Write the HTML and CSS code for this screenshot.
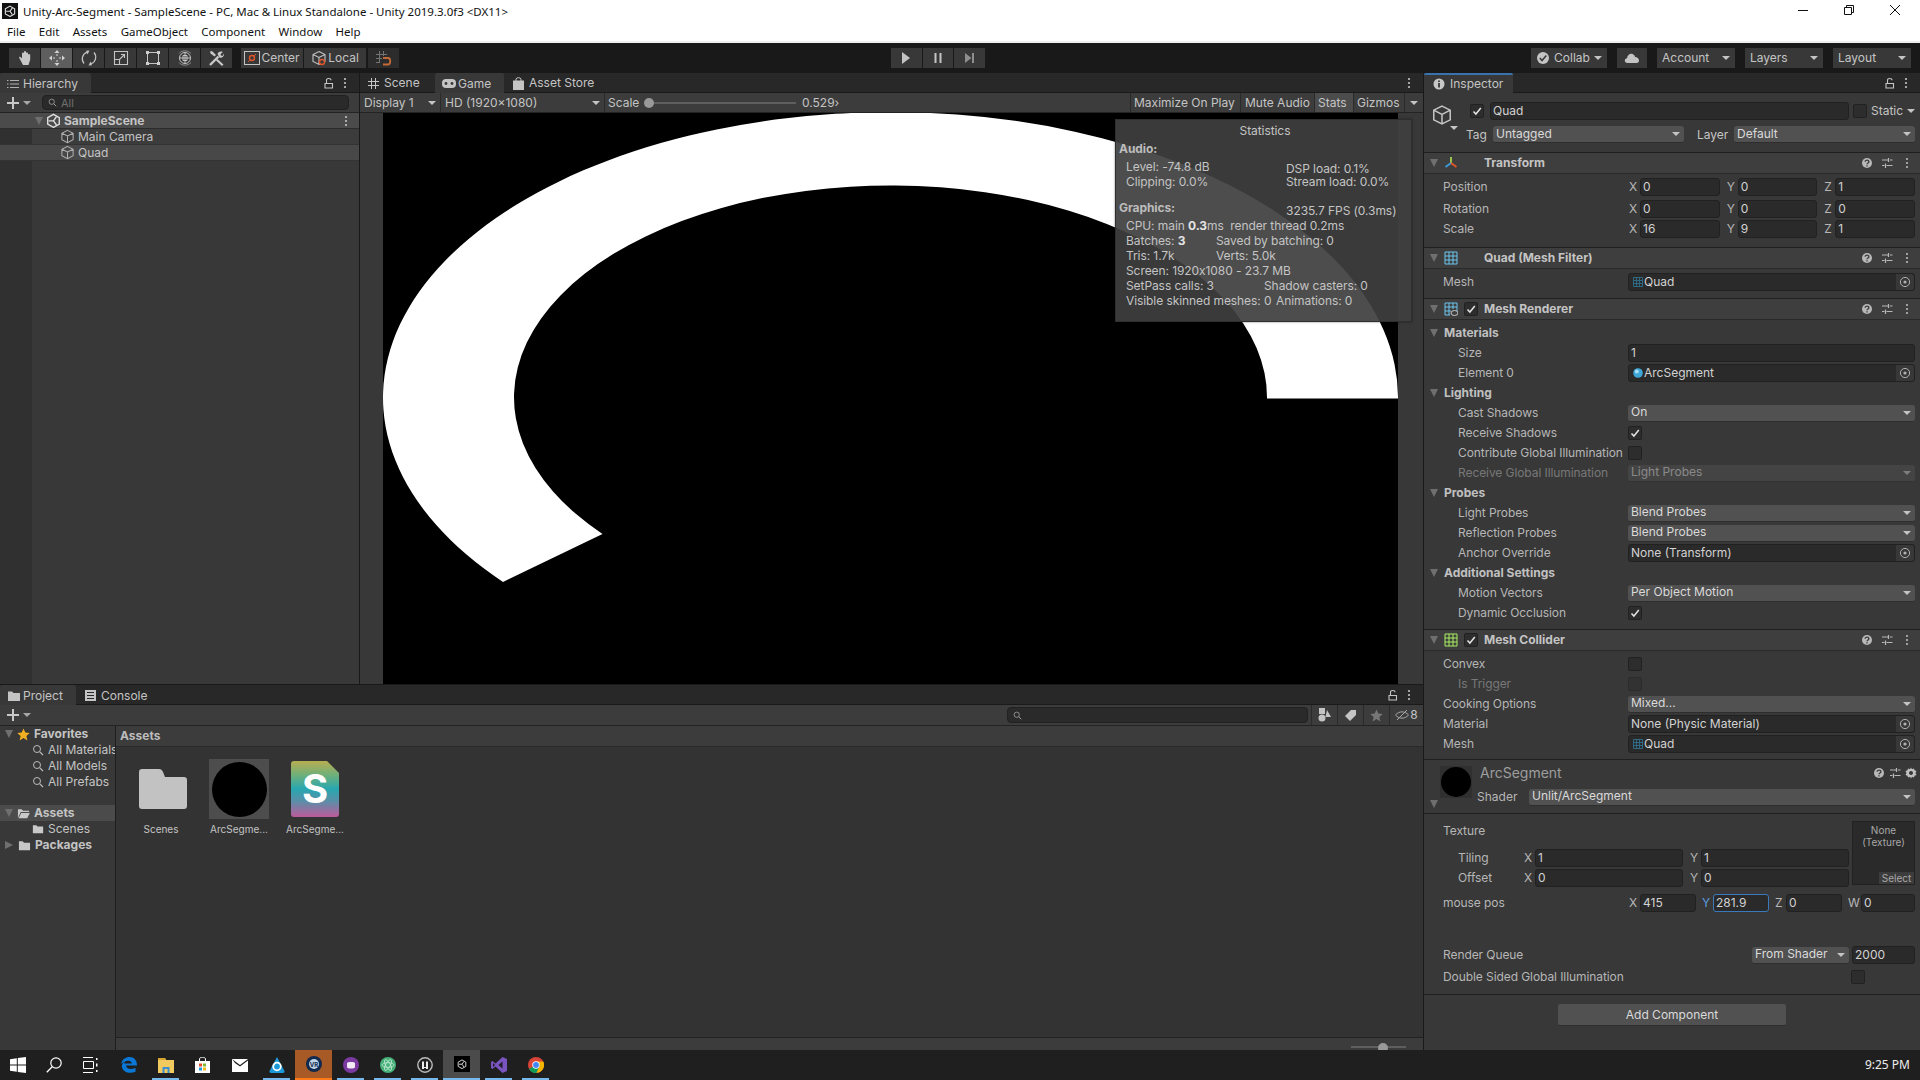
FILE: index.html
```html
<!DOCTYPE html>
<html lang="en">
<head>
<meta charset="utf-8">
<title>Unity-Arc-Segment</title>
<link rel="stylesheet" href="styles.css">
</head>
<body>
<svg class="defs" xmlns="http://www.w3.org/2000/svg">
  <symbol id="cube" viewBox="0 0 16 16"><path d="M8 1.5 14 4.5V11.5L8 14.5 2 11.5V4.5ZM2 4.5 8 7.5 14 4.5M8 7.5V14.5" fill="none" stroke="currentColor" stroke-width="1.1"/></symbol>
  <symbol id="lock" viewBox="0 0 10 12"><path d="M1 6.5H8.5V11H1ZM2.5 6.5V3.2C2.5 1 7 1 7 3.2" fill="none" stroke="currentColor" stroke-width="1.1"/></symbol>
  <symbol id="dots" viewBox="0 0 4 12"><circle cx="2" cy="2" r="1.1" fill="currentColor"/><circle cx="2" cy="6" r="1.1" fill="currentColor"/><circle cx="2" cy="10" r="1.1" fill="currentColor"/></symbol>
  <symbol id="help" viewBox="0 0 12 12"><circle cx="6" cy="6" r="5" fill="currentColor"/><path d="M4.2 4.7C4.2 2.6 7.9 2.7 7.9 4.7 7.9 6 6 6 6 7.3M6 8.3V9.5" fill="none" stroke="#3e3e3e" stroke-width="1.4"/></symbol>
  <symbol id="sliders" viewBox="0 0 12 12"><path d="M1 3H7M9 3H11.5M7.5 1V5M1 8.5H3.5M5.5 8.5H11.5M4.5 6.5V11" fill="none" stroke="currentColor" stroke-width="1.2"/></symbol>
  <symbol id="target" viewBox="0 0 12 12"><circle cx="6" cy="6" r="4.6" fill="none" stroke="currentColor" stroke-width="1"/><circle cx="6" cy="6" r="1.6" fill="currentColor"/></symbol>
  <symbol id="check" viewBox="0 0 12 12"><path d="M2.5 6.4 4.9 9 9.8 3" fill="none" stroke="currentColor" stroke-width="1.5"/></symbol>
  <symbol id="meshsmall" viewBox="0 0 12 12"><path d="M1.5 1.5H10.5V10.5H1.5ZM1.5 4.5H10.5M1.5 7.5H10.5M4.5 1.5V10.5M7.5 1.5V10.5" fill="none" stroke="#2f6f8c" stroke-width=".9"/></symbol>
  <symbol id="mag" viewBox="0 0 12 12"><circle cx="5" cy="5" r="3.5" fill="none" stroke="currentColor" stroke-width="1"/><path d="M7.6 7.6 11 11" stroke="currentColor" stroke-width="1.2"/></symbol>
  <symbol id="folder" viewBox="0 0 14 12"><path d="M1 1.5H5L6.5 3H13V11H1Z" fill="currentColor"/></symbol>
  <symbol id="plus" viewBox="0 0 14 14"><path d="M7 1V13M1 7H13" stroke="currentColor" stroke-width="2"/></symbol>
  <symbol id="unity" viewBox="0 0 14 14"><path d="M7 1.3 12.400 4.400V10.400L7 13.400 1.600 10.400V4.400Z" fill="none" stroke="#e0e0e0" stroke-width="1.300"/><path d="M7 7.300H2.500M7 7.300 9.800 3.400M7 7.300 9.800 11.200" stroke="#e0e0e0" stroke-width="1.300"/></symbol>
</svg>

<header class="titlebar">
  <svg class="title-icon" width="16" height="16" viewBox="0 0 16 16"><rect width="16" height="16" fill="#111"/><use href="#unity" x="2" y="2" width="12" height="12"/></svg>
  <span class="title-text">Unity-Arc-Segment - SampleScene - PC, Mac &amp; Linux Standalone - Unity 2019.3.0f3 &lt;DX11&gt;</span>
  <div class="win-btns">
    <svg width="10" height="10" viewBox="0 0 10 10"><path d="M0 5.5H10" stroke="#111"/></svg>
    <svg width="10" height="10" viewBox="0 0 10 10"><path d="M.5 2.5H7.5V9.5H.5ZM2.5 2.5V.5H9.5V7.5H7.5" fill="none" stroke="#111"/></svg>
    <svg width="10" height="10" viewBox="0 0 10 10"><path d="M0 0 10 10M10 0 0 10" stroke="#111"/></svg>
  </div>
</header>
<nav class="menubar"><span>File</span><span>Edit</span><span>Assets</span><span>GameObject</span><span>Component</span><span>Window</span><span>Help</span></nav>

<div class="toolbar">
  <div class="tb-left">
    <div class="tb-group">
      <div class="tb"><svg width="16" height="16" viewBox="0 0 16 16"><path d="M2 7.500 3 6.500 5 8.500V3L6.200 2.500 7 3V1.500L8 1 9 1.500V3L10 2.300 11 3V4.500L12 4 13.200 4.500V9.500L11.500 15H6L2 7.500Z" fill="#c8c8c8"/></svg></div>
      <div class="tb on"><svg width="18" height="18" viewBox="0 0 18 18"><path d="M9 1 11.500 4H6.500ZM9 17 6.500 14H11.500ZM1 9 4 6.500V11.500ZM17 9 14 11.500V6.500Z" fill="#d4d4d4"/><path d="M9 5V7M9 11V13M5 9H7M11 9H13" stroke="#d4d4d4"/></svg></div>
      <div class="tb"><svg width="18" height="18" viewBox="0 0 18 18"><path d="M4 14.500C1 11 2 5 7 3.200M14 3.500C17 7 16 13 11 14.800" fill="none" stroke="#c4c4c4" stroke-width="1.200"/><path d="M9.500 1.500 6 1.800 7.500 5.500ZM8.500 16.500 12 16.200 10.500 12.500Z" fill="#c4c4c4"/></svg></div>
      <div class="tb"><svg width="16" height="16" viewBox="0 0 16 16"><path d="M1.500 1.500H14.500V14.500H1.500ZM1.500 9.500H6.500V14.500M6.500 9.500 11.500 4.500M8 4.500H11.500V8" fill="none" stroke="#c4c4c4" stroke-width="1.100"/></svg></div>
      <div class="tb"><svg width="16" height="16" viewBox="0 0 16 16"><path d="M2.500 2.500H13.500V13.500H2.500Z" fill="none" stroke="#c4c4c4"/><path d="M1 1H4V4H1ZM12 1H15V4H12ZM1 12H4V15H1ZM12 12H15V15H12Z" fill="#d0d0d0"/></svg></div>
      <div class="tb"><svg width="18" height="18" viewBox="0 0 18 18"><circle cx="9" cy="9" r="5.500" fill="none" stroke="#c4c4c4"/><path d="M9 3.500V14.500M3.500 9H14.500" stroke="#c4c4c4"/><path d="M7 6.500H11V11.500H7Z" fill="none" stroke="#c4c4c4"/><path d="M3 4.500C5.500 1 12 1 15 4.500M3 13.500C5.500 17 12 17 15 13.500" fill="none" stroke="#8e8e8e"/></svg></div>
      <div class="tb"><svg width="17" height="17" viewBox="0 0 17 17"><path d="M2 15 10.500 6.500" stroke="#c8c8c8" stroke-width="2.400"/><path d="M9.500 4C10.500 1.500 13 1 14.800 2L12.500 4.300 13 5.500 14.500 6 16 3.500C16.500 6 14 8.500 11.500 7.500Z" fill="#c8c8c8"/><path d="M2 1.500 4 1 8 5 6.500 6.500 2.500 3.500ZM9.500 9 15.500 14.500 14 16 8 10.500Z" fill="#c8c8c8"/></svg></div>
    </div>
    <div class="tb-group tb-pivot">
      <div class="tb wide"><svg width="16" height="16" viewBox="0 0 16 16"><rect x=".5" y="1.500" width="15" height="13" fill="none" stroke="#c4c4c4"/><circle cx="8" cy="8" r="2.500" fill="none" stroke="#e0562a" stroke-width="1.400"/><path d="M4 12 6 10M10 6 12 4" stroke="#e0562a"/></svg><span>Center</span></div>
      <div class="tb wide"><svg width="16" height="16" viewBox="0 0 16 16"><use href="#cube" class="ic-soft"/><circle cx="11" cy="12" r="2.500" fill="#383838" stroke="#e0562a" stroke-width="1.400"/></svg><span>Local</span></div>
    </div>
    <div class="tb snap"><svg width="17" height="17" viewBox="0 0 17 17"><path d="M4.500 1V13M8.500 1V6M1 4.500H12M1 8.500H7M1 12.500H5" stroke="#747474"/><path d="M8 8H13C16 8 16 14.500 13 14.500H8" fill="none" stroke="#c46a36" stroke-width="1.800"/></svg></div>
  </div>
  <div class="tb-group tb-play">
    <div class="tb pl"><svg width="10" height="12" viewBox="0 0 10 12"><path d="M1 0 9 6 1 12Z" fill="#c4c4c4"/></svg></div>
    <div class="tb pl"><svg width="10" height="12" viewBox="0 0 10 12"><path d="M1.500 1H3.500V11H1.500ZM6.500 1H8.500V11H6.500Z" fill="#c4c4c4"/></svg></div>
    <div class="tb pl"><svg width="11" height="12" viewBox="0 0 11 12"><path d="M1 1 7.500 6 1 11ZM8 1H10V11H8Z" fill="#8e8e8e"/></svg></div>
  </div>
  <div class="tb-right">
    <div class="tb r-collab"><svg width="14" height="14" viewBox="0 0 14 14"><circle cx="7" cy="7" r="6" fill="#c4c4c4"/><path d="M3.800 7 6 9.500 10.300 4.500" fill="none" stroke="#383838" stroke-width="1.500"/></svg><span>Collab</span><i class="caret"></i></div>
    <div class="tb r-cloud"><svg width="16" height="12" viewBox="0 0 16 12"><path d="M3.500 11C0 11 0 6.500 3 6.200 3.500 2.500 6.500 1 9 2.200 10.500 3 11 4 11 5 15.500 4.800 16.500 11 12.500 11Z" fill="#c4c4c4"/></svg></div>
    <div class="tb r-dd"><span>Account</span><i class="caret"></i></div>
    <div class="tb r-dd"><span>Layers</span><i class="caret"></i></div>
    <div class="tb r-dd"><span>Layout</span><i class="caret"></i></div>
  </div>
</div>

<main class="workspace">
  <div class="left-col">
    <div class="top-row">
      <section class="hierarchy">
        <div class="tabstrip">
          <div class="tab active t-hier"><svg class="tab-ic" width="12" height="10" viewBox="0 0 12 10"><path d="M3 1.500H12M3 5H12M3 8.500H12" stroke="#b0b0b0"/><path d="M0 1H1.500V2H0ZM0 4.500H1.500V5.500H0ZM0 8H1.500V9H0Z" fill="#b0b0b0"/></svg><span>Hierarchy</span></div>
          <div class="strip-end"><svg class="ic-lock"><use href="#lock"/></svg><svg class="ic-dots"><use href="#dots"/></svg></div>
        </div>
        <div class="subbar">
          <svg class="ic-plus"><use href="#plus"/></svg><i class="caret small"></i>
          <div class="search hsearch"><svg class="ic-mini"><use href="#mag"/></svg><span>All</span></div>
        </div>
        <div class="tree">
          <div class="scene-row"><i class="fold"></i><svg class="ic-unity" viewBox="0 0 14 14"><use href="#unity"/></svg><b>SampleScene</b><svg class="ic-dots end"><use href="#dots"/></svg></div>
          <div class="go-row cam"><svg class="ic-go"><use href="#cube"/></svg><span>Main Camera</span></div>
          <div class="go-row sel"><svg class="ic-go"><use href="#cube"/></svg><span>Quad</span></div>
        </div>
      </section>
      <section class="game">
        <div class="tabstrip">
          <div class="tab t-scene"><svg class="tab-ic" width="11" height="11" viewBox="0 0 11 11"><path d="M3.500 0V11M7.500 0V11M0 3.500H11M0 7.500H11" stroke="#c4c4c4"/></svg><span>Scene</span></div>
          <div class="tab active t-game"><svg class="tab-ic" width="14" height="9" viewBox="0 0 14 9"><rect y="0" width="14" height="9" rx="4" fill="#c4c4c4"/><circle cx="4" cy="4.500" r="1.400" fill="#383838"/><circle cx="10" cy="4.500" r="1.400" fill="#383838"/></svg><span>Game</span></div>
          <div class="tab t-store"><svg class="tab-ic" width="11" height="13" viewBox="0 0 11 13"><path d="M0 3.500H11V13H0Z" fill="#c4c4c4"/><path d="M3 5V2C3 .3 8 .3 8 2V5" fill="none" stroke="#c4c4c4"/></svg><span>Asset Store</span></div>
          <div class="strip-end"><svg class="ic-dots"><use href="#dots"/></svg></div>
        </div>
        <div class="gamebar">
          <div class="gb-dd gb-display"><span>Display 1</span><i class="caret"></i></div>
          <div class="gb-dd gb-res"><span>HD (1920x1080)</span><i class="caret"></i></div>
          <span class="gb-scale">Scale</span>
          <div class="gb-slider"><i></i></div>
          <span class="gb-val">0.529&#8250;</span>
          <div class="gb-right">
            <span class="gb-btn b-max">Maximize On Play</span>
            <span class="gb-btn b-mute">Mute Audio</span>
            <span class="gb-btn b-stats">Stats</span>
            <span class="gb-btn b-giz">Gizmos</span>
            <span class="gb-arrow"><i class="caret"></i></span>
          </div>
        </div>
        <div class="gameview">
          <svg class="canvas" width="1015" height="571" viewBox="0 0 1015 571"><rect width="1015" height="571" fill="#000"/><path d="M1015 285.500A507.500 285.500 0 1 0 120 469L219.500 421A376.500 212 0 1 1 884 285.500Z" fill="#fff"/></svg>
          <div class="stats">
            <div class="st-title">Statistics</div>
            <div class="st-head">Audio:</div>
            <div class="st-two">
              <div class="st-col-a"><div class="st-line">Level: -74.8 dB</div><div class="st-line">Clipping: 0.0%</div></div>
              <div class="st-col-b"><div class="st-tight">DSP load: 0.1%</div><div class="st-tight">Stream load: 0.0%</div></div>
            </div>
            <div class="st-gfx"><span class="st-head">Graphics:</span><span class="st-fps">3235.7 FPS (0.3ms)</span></div>
            <div class="st-line">CPU: main <b>0.3</b>ms&nbsp; render thread 0.2ms</div>
            <div class="st-line"><span class="st-c1">Batches: <b>3</b></span>Saved by batching: 0</div>
            <div class="st-line"><span class="st-c1">Tris: 1.7k</span>Verts: 5.0k</div>
            <div class="st-line">Screen: 1920x1080 - 23.7 MB</div>
            <div class="st-line"><span class="st-c2">SetPass calls: 3</span>Shadow casters: 0</div>
            <div class="st-line"><span class="st-c3">Visible skinned meshes: 0</span>Animations: 0</div>
          </div>
        </div>
      </section>
    </div>
    <section class="project">
      <div class="tabstrip">
        <div class="tab active t-proj"><svg class="tab-ic ic-folder-tab" viewBox="0 0 14 12"><use href="#folder"/></svg><span>Project</span></div>
        <div class="tab t-cons"><svg class="tab-ic" width="11" height="11" viewBox="0 0 11 11"><path d="M0 0H11V11H0Z" fill="#c4c4c4"/><path d="M2 2.500H9M2 5.500H9M2 8.500H9" stroke="#282828"/></svg><span>Console</span></div>
        <div class="strip-end"><svg class="ic-lock"><use href="#lock"/></svg><svg class="ic-dots"><use href="#dots"/></svg></div>
      </div>
      <div class="subbar pbar">
        <svg class="ic-plus"><use href="#plus"/></svg><i class="caret small"></i>
        <div class="search psearch"><svg class="ic-mini"><use href="#mag"/></svg></div>
        <div class="pb-btn"><svg width="14" height="14" viewBox="0 0 14 14"><circle cx="4" cy="10" r="3.500" fill="#c4c4c4"/><rect x="1" y="0" width="6" height="6" fill="#c4c4c4"/><path d="M9 2 13 9H7.500Z" fill="#c4c4c4"/></svg></div>
        <div class="pb-btn"><svg width="13" height="13" viewBox="0 0 13 13"><path d="M7 1H12V6L6 12 1 7Z" fill="#c4c4c4"/></svg></div>
        <div class="pb-btn"><svg width="13" height="13" viewBox="0 0 13 13"><path d="M6.500 .5 8.300 4.600 12.700 5 9.400 8 10.400 12.400 6.500 10.100 2.600 12.400 3.600 8 .3 5 4.700 4.600Z" fill="#777"/></svg></div>
        <div class="pb-btn eye"><svg width="14" height="12" viewBox="0 0 14 12"><path d="M.5 6C4 1.800 10 1.800 13.500 6 10 10.200 4 10.200 .5 6ZM2 11 12 1" fill="none" stroke="#a8a8a8"/></svg><span>8</span></div>
      </div>
      <div class="p-body">
        <div class="p-tree">
          <div class="p-row"><i class="fold"></i><svg class="ic-star" viewBox="0 0 13 13"><path d="M6.500 .5 8.300 4.600 12.700 5 9.400 8 10.400 12.400 6.500 10.100 2.600 12.400 3.600 8 .3 5 4.700 4.600Z" fill="#f0b020"/></svg><b>Favorites</b></div>
          <div class="p-row sub"><svg class="ic-pico"><use href="#mag"/></svg><span>All Materials</span></div>
          <div class="p-row sub"><svg class="ic-pico"><use href="#mag"/></svg><span>All Models</span></div>
          <div class="p-row sub"><svg class="ic-pico"><use href="#mag"/></svg><span>All Prefabs</span></div>
          <div class="p-row p-sel"><i class="fold"></i><svg class="ic-star" viewBox="0 0 14 12"><path d="M1 1.500H5L6.500 3H13V4.500H4L1 11Z M4.500 5.500H13.800L11 11H1.800Z" fill="#c8c8c8"/></svg><b>Assets</b></div>
          <div class="p-row sub"><svg class="ic-pico fill" viewBox="0 0 14 12"><use href="#folder"/></svg><span>Scenes</span></div>
          <div class="p-row"><i class="fold closed"></i><svg class="ic-star fill" viewBox="0 0 14 12"><use href="#folder"/></svg><b>Packages</b></div>
        </div>
        <div class="p-main">
          <div class="p-head"><b>Assets</b></div>
          <div class="p-items">
            <div class="asset a-folder">
              <div class="asset-ic"><svg width="48" height="40" viewBox="0 0 48 40"><path d="M3 0H20C22 0 23 1 24 3L26 8H45C47 8 48 9 48 11V37C48 39 47 40 45 40H3C1 40 0 39 0 37V3C0 1 1 0 3 0Z" fill="#c2c2c2"/></svg></div>
              <span>Scenes</span>
            </div>
            <div class="asset">
              <div class="asset-ic"><div class="mat-thumb"><i></i></div></div>
              <span>ArcSegme...</span>
            </div>
            <div class="asset">
              <div class="asset-ic">
                <svg width="48" height="56" viewBox="0 0 48 56"><defs><linearGradient id="shg" x1="0" y1="0" x2="0" y2="1"><stop offset="0" stop-color="#b8ad50"/><stop offset=".25" stop-color="#6fb07a"/><stop offset=".5" stop-color="#27a7b0"/><stop offset=".72" stop-color="#5c8ea8"/><stop offset="1" stop-color="#bd5a9a"/></linearGradient></defs><path d="M3 0H36L48 12V53C48 55 47 56 45 56H3C1 56 0 55 0 53V3C0 1 1 0 3 0Z" fill="url(#shg)"/><text x="24" y="42" text-anchor="middle" class="shader-s">S</text></svg>
              </div>
              <span>ArcSegme...</span>
            </div>
          </div>
          <div class="p-status"><div class="p-slider"><i></i></div></div>
        </div>
      </div>
    </section>
  </div>

  <aside class="inspector">
    <div class="tabstrip">
      <div class="tab active t-insp"><svg class="tab-ic" width="12" height="12" viewBox="0 0 12 12"><circle cx="6" cy="6" r="5.500" fill="#c8c8c8"/><path d="M6 2.500V4M6 5V9.500" stroke="#383838" stroke-width="1.800"/></svg><span>Inspector</span></div>
      <div class="strip-end"><svg class="ic-lock"><use href="#lock"/></svg><svg class="ic-dots"><use href="#dots"/></svg></div>
    </div>
    <div class="i-head">
      <svg class="ih-icon" width="22" height="24" viewBox="0 0 16 17"><use href="#cube"/></svg>
      <i class="caret ih-caret"></i>
      <div class="ih-r1">
        <span class="cb"><svg><use href="#check"/></svg></span>
        <div class="f ih-name">Quad</div>
        <span class="cb"></span>
        <span class="ih-static">Static</span><i class="caret"></i>
      </div>
      <div class="ih-r2">
        <span class="ih-tag">Tag</span>
        <div class="dd ih-dd1"><span>Untagged</span><i class="caret"></i></div>
        <span class="ih-layer">Layer</span>
        <div class="dd ih-dd2"><span>Default</span><i class="caret"></i></div>
      </div>
    </div>

    <div class="comp c-transform">
      <div class="ch"><i class="fold"></i>
        <svg class="ci" viewBox="0 0 14 14"><path d="M7 1V7" stroke="#9ac44a" stroke-width="2"/><path d="M7 7 1.500 11" stroke="#3a9ad8" stroke-width="2"/><path d="M7 7 12.500 11" stroke="#e0562a" stroke-width="2"/></svg>
        <span class="cb ghost"></span><b>Transform</b>
        <div class="ch-end"><svg class="e1"><use href="#help"/></svg><svg class="e1"><use href="#sliders"/></svg><svg class="e2"><use href="#dots"/></svg></div>
      </div>
      <div class="comp-body">
        <div class="row r-pos"><span class="lbl">Position</span><div class="vec3"><div class="ax"><em>X</em><div class="f">0</div></div><div class="ax"><em>Y</em><div class="f">0</div></div><div class="ax"><em>Z</em><div class="f">1</div></div></div></div>
        <div class="row"><span class="lbl">Rotation</span><div class="vec3"><div class="ax"><em>X</em><div class="f">0</div></div><div class="ax"><em>Y</em><div class="f">0</div></div><div class="ax"><em>Z</em><div class="f">0</div></div></div></div>
        <div class="row"><span class="lbl">Scale</span><div class="vec3"><div class="ax"><em>X</em><div class="f">16</div></div><div class="ax"><em>Y</em><div class="f">9</div></div><div class="ax"><em>Z</em><div class="f">1</div></div></div></div>
      </div>
    </div>

    <div class="comp c-filter">
      <div class="ch"><i class="fold"></i>
        <svg class="ci" viewBox="0 0 14 14"><path d="M1 1H13V13H1ZM1 5H13M1 9H13M5 1V13M9 1V13" fill="none" stroke="#6cc4ee" stroke-width="1"/></svg>
        <span class="cb ghost"></span><b>Quad (Mesh Filter)</b>
        <div class="ch-end"><svg class="e1"><use href="#help"/></svg><svg class="e1"><use href="#sliders"/></svg><svg class="e2"><use href="#dots"/></svg></div>
      </div>
      <div class="comp-body">
        <div class="row"><span class="lbl">Mesh</span><div class="obj"><svg class="obj-ic"><use href="#meshsmall"/></svg><span>Quad</span><div class="pick"><svg><use href="#target"/></svg></div></div></div>
      </div>
    </div>

    <div class="comp c-render">
      <div class="ch"><i class="fold"></i>
        <svg class="ci" viewBox="0 0 14 14"><path d="M1 1H13V10H9M1 1V13H6M1 5H13M1 9H7M5 1V13M9 1V7" fill="none" stroke="#6cc4ee" stroke-width="1"/><ellipse cx="10.500" cy="11" rx="3.500" ry="2.500" fill="#3e3e3e" stroke="#c4c4c4"/></svg>
        <span class="cb"><svg><use href="#check"/></svg></span><b>Mesh Renderer</b>
        <div class="ch-end"><svg class="e1"><use href="#help"/></svg><svg class="e1"><use href="#sliders"/></svg><svg class="e2"><use href="#dots"/></svg></div>
      </div>
      <div class="comp-body">
        <div class="row sect"><i class="fold"></i><b>Materials</b></div>
        <div class="row"><span class="lbl in">Size</span><div class="f grow">1</div></div>
        <div class="row"><span class="lbl in">Element 0</span><div class="obj"><svg class="obj-ic" viewBox="0 0 12 12"><circle cx="6" cy="6" r="4.800" fill="#3fa6d8"/><circle cx="4.800" cy="4.600" r="2" fill="#a8ddf5"/></svg><span>ArcSegment</span><div class="pick"><svg><use href="#target"/></svg></div></div></div>
        <div class="row sect"><i class="fold"></i><b>Lighting</b></div>
        <div class="row"><span class="lbl in">Cast Shadows</span><div class="dd grow"><span>On</span><i class="caret"></i></div></div>
        <div class="row"><span class="lbl in">Receive Shadows</span><span class="cb"><svg><use href="#check"/></svg></span></div>
        <div class="row"><span class="lbl in">Contribute Global Illumination</span><span class="cb"></span></div>
        <div class="row off"><span class="lbl in">Receive Global Illumination</span><div class="dd grow"><span>Light Probes</span><i class="caret"></i></div></div>
        <div class="row sect"><i class="fold"></i><b>Probes</b></div>
        <div class="row"><span class="lbl in">Light Probes</span><div class="dd grow"><span>Blend Probes</span><i class="caret"></i></div></div>
        <div class="row"><span class="lbl in">Reflection Probes</span><div class="dd grow"><span>Blend Probes</span><i class="caret"></i></div></div>
        <div class="row"><span class="lbl in">Anchor Override</span><div class="obj"><span class="obj-plain">None (Transform)</span><div class="pick"><svg><use href="#target"/></svg></div></div></div>
        <div class="row sect"><i class="fold"></i><b>Additional Settings</b></div>
        <div class="row"><span class="lbl in">Motion Vectors</span><div class="dd grow"><span>Per Object Motion</span><i class="caret"></i></div></div>
        <div class="row"><span class="lbl in">Dynamic Occlusion</span><span class="cb"><svg><use href="#check"/></svg></span></div>
      </div>
    </div>

    <div class="comp c-collider">
      <div class="ch"><i class="fold"></i>
        <svg class="ci" viewBox="0 0 14 14"><path d="M1 1H13V13H1ZM1 5H13M1 9H13M5 1V13M9 1V13" fill="none" stroke="#a8f060" stroke-width="1"/></svg>
        <span class="cb"><svg><use href="#check"/></svg></span><b>Mesh Collider</b>
        <div class="ch-end"><svg class="e1"><use href="#help"/></svg><svg class="e1"><use href="#sliders"/></svg><svg class="e2"><use href="#dots"/></svg></div>
      </div>
      <div class="comp-body">
        <div class="row"><span class="lbl">Convex</span><span class="cb"></span></div>
        <div class="row off"><span class="lbl in">Is Trigger</span><span class="cb"></span></div>
        <div class="row"><span class="lbl">Cooking Options</span><div class="dd grow"><span>Mixed...</span><i class="caret"></i></div></div>
        <div class="row"><span class="lbl">Material</span><div class="obj"><span class="obj-plain">None (Physic Material)</span><div class="pick"><svg><use href="#target"/></svg></div></div></div>
        <div class="row"><span class="lbl">Mesh</span><div class="obj"><svg class="obj-ic"><use href="#meshsmall"/></svg><span>Quad</span><div class="pick"><svg><use href="#target"/></svg></div></div></div>
      </div>
    </div>

    <div class="mat-head">
      <div class="mh-thumb"><i></i></div>
      <i class="fold mh-fold"></i>
      <div class="mh-main">
        <div class="mh-top"><span class="mh-name">ArcSegment</span>
          <div class="mh-icons"><svg><use href="#help"/></svg><svg><use href="#sliders"/></svg><svg viewBox="0 0 12 12"><path d="M6 .5 7 2.200 9 1.500 9.500 3.300 11.500 4 10.500 6 11.500 8 9.500 8.700 9 10.500 7 9.800 6 11.500 5 9.800 3 10.500 2.500 8.700 .5 8 1.500 6 .5 4 2.500 3.300 3 1.500 5 2.200Z M6 4A2 2 0 1 0 6.010 4Z" fill="#c0c0c0" fill-rule="evenodd"/></svg></div>
        </div>
        <div class="mh-shader"><span class="mh-sl">Shader</span><div class="dd grow"><span>Unlit/ArcSegment</span><i class="caret"></i></div></div>
      </div>
    </div>

    <div class="mat-body">
      <div class="mb-top">
        <div class="mb-left">
          <div class="row mb-tex"><span class="lbl">Texture</span></div>
          <div class="row"><span class="lbl in short">Tiling</span><div class="ax"><em>X</em><div class="f">1</div></div><div class="ax"><em>Y</em><div class="f">1</div></div></div>
          <div class="row"><span class="lbl in short">Offset</span><div class="ax"><em>X</em><div class="f">0</div></div><div class="ax"><em>Y</em><div class="f">0</div></div></div>
        </div>
        <div class="texbox"><span>None<br>(Texture)</span><div class="tex-sel">Select</div></div>
      </div>
      <div class="row r-mouse"><span class="lbl">mouse pos</span>
        <div class="vec4">
          <div class="ax"><em>X</em><div class="f">415</div></div>
          <div class="ax focus"><em>Y</em><div class="f">281.9</div></div>
          <div class="ax"><em>Z</em><div class="f">0</div></div>
          <div class="ax w"><em>W</em><div class="f">0</div></div>
        </div>
      </div>
      <div class="row r-queue"><span class="lbl grow">Render Queue</span><div class="dd q-dd"><span>From Shader</span><i class="caret"></i></div><div class="f q-f">2000</div></div>
      <div class="row"><span class="lbl grow">Double Sided Global Illumination</span><span class="cb q-cb"></span></div>
    </div>
    <div class="add-wrap"><div class="add-btn">Add Component</div></div>
  </aside>
</main>

<footer class="taskbar">
  <div class="task t-win"><svg width="16" height="16" viewBox="0 0 16 16"><path d="M0 2.200 6.800 1.200V7.500H0ZM7.800 1.100 16 0V7.500H7.800ZM0 8.500H6.800V14.800L0 13.800ZM7.800 8.500H16V16L7.800 14.900Z" fill="#fff"/></svg></div>
  <div class="task t-win"><svg width="16" height="16" viewBox="0 0 16 16"><circle cx="10" cy="6" r="5.200" fill="none" stroke="#fff" stroke-width="1.200"/><path d="M6.200 9.800 .8 15.300" stroke="#fff" stroke-width="1.300"/></svg></div>
  <div class="task t-win"><svg width="16" height="16" viewBox="0 0 16 16"><path d="M1 .5H11M1 15.500H11M1.500 4.500H11.500V11.500H1.500Z" fill="none" stroke="#fff"/><path d="M14 1H15.500V3H14ZM14 6.500H15.500V9.500H14ZM14 13H15.500V15H14Z" fill="#fff"/></svg></div>
  <div class="task t-edge"><svg width="16" height="16" viewBox="0 0 16 16"><path d="M.2 7C1 2 5 0 8.500 0 13 0 16 3 16 8.500H5C5.300 12 10 13 14.500 10.700V14.700C9.500 17 2.800 16 1 10.500 .3 8.500 1.500 6 4 4.200 3.600 5 3.300 6 3.300 6.500H10.800C10.800 3.500 5.500 1.800 .2 7Z" fill="#0a78d7"/></svg></div>
  <div class="task run"><svg width="16" height="15" viewBox="0 0 16 15"><path d="M0 0H7L8 2H16V15H0Z" fill="#f0c95f"/><path d="M0 0H7L8 2H0Z" fill="#d6a430"/><path d="M4.500 9H11.500V15H9.500V11H6.500V15H4.500Z" fill="#3a8fd0"/></svg></div>
  <div class="task"><svg width="15" height="16" viewBox="0 0 15 16"><path d="M0 4H15V16H0Z" fill="#fff"/><path d="M4.500 4V2C4.500-.3 10.500-.3 10.500 2V4" fill="none" stroke="#fff"/><path d="M4 6.500H7V9.500H4Z" fill="#e8492d"/><path d="M8 6.500H11V9.500H8Z" fill="#7cb82f"/><path d="M4 10.500H7V13.500H4Z" fill="#1e9ae0"/><path d="M8 10.500H11V13.500H8Z" fill="#f7b81c"/></svg></div>
  <div class="task"><svg width="16" height="13" viewBox="0 0 16 13"><path d="M0 0H16V13H0Z" fill="#fff"/><path d="M0 0 8 6 16 0 16 1.500 8 7.500 3 4Z" fill="#1f1f1f"/></svg></div>
  <div class="task run"><svg width="16" height="16" viewBox="0 0 16 16"><path d="M8 0 15.500 14C15.800 15 15 16 14 16H2C1 16 .2 15 .5 14Z" fill="#1a9ad8"/><circle cx="8" cy="9.500" r="3.800" fill="none" stroke="#fff" stroke-width="1.800"/></svg></div>
  <div class="task t-orange"><svg width="16" height="16" viewBox="0 0 16 16"><circle cx="8" cy="8" r="8" fill="#10294f"/><circle cx="8" cy="8" r="5" fill="#bcd2e6"/><text x="8" y="10.500" text-anchor="middle" class="ti-vr">VR</text></svg></div>
  <div class="task run"><svg width="16" height="16" viewBox="0 0 16 16"><circle cx="8" cy="8" r="8" fill="#7a3aa0"/><path d="M4 6C4 4.500 12 4.500 12 6V10C12 12 4 12 4 10Z" fill="#f2eaf6"/></svg></div>
  <div class="task run"><svg width="16" height="16" viewBox="0 0 16 16"><circle cx="8" cy="8" r="8" fill="#45b078"/><ellipse cx="8" cy="8" rx="6" ry="2.300" fill="none" stroke="#cfeedd" stroke-width=".7" transform="rotate(60 8 8)"/><ellipse cx="8" cy="8" rx="6" ry="2.300" fill="none" stroke="#cfeedd" stroke-width=".7" transform="rotate(-60 8 8)"/><ellipse cx="8" cy="8" rx="6" ry="2.300" fill="none" stroke="#cfeedd" stroke-width=".7"/></svg></div>
  <div class="task run"><svg width="16" height="16" viewBox="0 0 16 16"><circle cx="8" cy="8" r="7.200" fill="#222" stroke="#bbb" stroke-width="1.400"/><path d="M5 4.500H7V10H9V4.500H11V12H9V11H7V12H5Z" fill="#eee"/></svg></div>
  <div class="task t-unity"><svg width="16" height="16" viewBox="0 0 16 16"><rect width="16" height="16" fill="#000"/><use href="#unity" x="3" y="3" width="10" height="10"/></svg></div>
  <div class="task run"><svg width="16" height="16" viewBox="0 0 16 16"><path d="M11.500 0 16 2V14L11.500 16 4.500 9.500 1.500 12 0 11V5L1.500 4 4.500 6.500ZM11.500 4.500 7.500 8 11.500 11.500ZM2 6V10L4 8Z" fill="#7a55c0" fill-rule="evenodd"/></svg></div>
  <div class="task run"><svg width="16" height="16" viewBox="0 0 16 16"><circle cx="8" cy="8" r="8" fill="#db4437"/><path d="M8 8 1 12A8 8 0 0 0 8.500 16L12 8Z" fill="#0f9d58"/><path d="M8 4.500H15.300A8 8 0 0 1 8.500 16L12 8Z" fill="#f4b400"/><circle cx="8" cy="8" r="3.700" fill="#fff"/><circle cx="8" cy="8" r="2.900" fill="#4285f4"/></svg></div>
  <span class="clock">9:25 PM</span>
</footer>
</body>
</html>
```
FILE: styles.css
```css
* { box-sizing: border-box; }
html, body { margin: 0; padding: 0; }
body {
  width: 1920px; height: 1080px; overflow: hidden;
  display: flex; flex-direction: column;
  background: #191919; color: #c4c4c4;
  font: 12px/16px Inter, "Liberation Sans", sans-serif;
}
.defs { display: none; }
svg { display: block; flex: none; }
b { font-weight: 700; }
em { font-style: normal; }
.ic-soft { color: #c4c4c4; }

/* window chrome */
.titlebar { height: 22px; background: #fff; color: #111; display: flex; align-items: center; font: 11.5px/16px "Noto Sans", "Liberation Sans", sans-serif; padding-top: 1px; }
.title-icon { margin-left: 2px; margin-right: 5px; margin-top: -1px; }
.title-text { white-space: nowrap; }
.win-btns { margin-left: auto; display: flex; gap: 36px; padding-right: 20px; margin-top: -3px; }
.menubar { height: 21px; background: #fff; border-bottom: 2px solid #f0f0f0; color: #111; display: flex; gap: 13.4px; padding: 1px 0 0 7px; align-items: center; font: 11.5px/16px "Noto Sans", "Liberation Sans", sans-serif; }

/* main toolbar */
.toolbar { height: 30px; flex: none; background: #191919; display: flex; padding-top: 5px; }
.tb-left { width: 891px; display: flex; padding-left: 9px; }
.tb-group { display: flex; gap: 1px; }
.tb { width: 31px; height: 20px; background: #383838; display: flex; align-items: center; justify-content: center; color: #c4c4c4; }
.tb.on { background: #5e5e5e; }
.tb.wide { width: 62px; gap: 1px; }
.tb-pivot { margin-left: 9px; }
.snap { margin-left: 2px; background: #2c2c2c; }
.tb-play { width: 94px; }
.tb-right { margin-left: auto; padding-right: 9px; display: flex; gap: 10px; }
.r-collab { width: 76px; gap: 4px; }
.r-cloud { width: 30px; }
.r-dd { width: 78px; justify-content: space-between; padding: 0 5px; }
.caret { display: block; flex: none; width: 0; height: 0; border-left: 4px solid transparent; border-right: 4px solid transparent; border-top: 4px solid #c4c4c4; }
.caret.small { border-top-color: #a8a8a8; }

/* layout */
.workspace { flex: 1; min-height: 0; display: flex; gap: 1px; background: #191919; }
.left-col { width: 1423px; display: flex; flex-direction: column; gap: 1px; }
.top-row { height: 611px; display: flex; gap: 1px; }
.tabstrip { flex: none; background: #282828; display: flex; border-bottom: 1px solid #1a1a1a; height: 20px; }
.tab { display: flex; align-items: center; gap: 4px; height: 19px; padding: 1px 0 0 7px; white-space: nowrap; }
.tab.active { background: #383838; height: 20px; border-radius: 2px 2px 0 0; }
.strip-end { margin-left: auto; display: flex; align-items: center; gap: 9px; padding-right: 12px; }
.ic-lock { width: 10px; height: 12px; color: #c4c4c4; }
.ic-dots { width: 4px; height: 12px; color: #c4c4c4; }
.ic-plus { width: 14px; height: 14px; color: #c8c8c8; margin-left: 6px; margin-right: 3px; }
.ic-folder-tab { width: 14px; height: 12px; color: #c4c4c4; }
.t-hier { width: 91px; }
.t-scene { width: 75px; padding-left: 8px; gap: 5px; }
.t-game { width: 69px; gap: 2px; }
.t-store { width: 110px; padding-left: 9px; gap: 5px; }
.t-proj { width: 76px; gap: 2px; padding-top: 2px; }
.t-cons { width: 80px; padding-left: 9px; gap: 5px; padding-top: 2px; }
.t-insp { width: 89px; padding: 0 0 0 9px; gap: 5px; border-top: 2px solid #3a72b0; }

/* hierarchy */
.hierarchy { width: 359px; background: #383838; display: flex; flex-direction: column; }
.subbar { height: 20px; flex: none; display: flex; align-items: center; background: #3c3c3c; border-bottom: 1px solid #232323; }
.search { height: 15px; background: #2a2a2a; border: 1px solid #212121; border-radius: 4px; display: flex; align-items: center; gap: 4px; padding-left: 5px; color: #6f6f6f; font-size: 11px; }
.hsearch { width: 307px; margin-left: 11px; }
.ic-mini { width: 9px; height: 9px; color: #aaa; }
.tree { flex: 1; background: linear-gradient(90deg, #303030 32px, #383838 32px); }
.scene-row { height: 16px; background: #4b4b4b; display: flex; align-items: center; padding-left: 35px; border-bottom: 1px solid #2c2c2c; }
.fold { display: block; flex: none; width: 0; height: 0; border-left: 4.5px solid transparent; border-right: 4.5px solid transparent; border-top: 8px solid #6f6f6f; }
.fold.closed { border-top: 4.500px solid transparent; border-bottom: 4.500px solid transparent; border-left: 8px solid #6f6f6f; border-right: 0; margin-right: 1px; }
.ic-unity { width: 15px; height: 15px; margin-left: 3px; margin-right: 3px; }
.ic-dots.end { margin-left: auto; margin-right: 11px; }
.go-row { height: 16px; display: flex; align-items: center; gap: 3px; padding-left: 60px; border-bottom: 1px solid #333; }
.go-row.cam { background: linear-gradient(90deg, #303030 32px, #3c3c3c 32px); }
.go-row.sel { background: #484848; }
.ic-go { width: 15px; height: 15px; color: #b0b0b0; }

/* game */
.game { flex: 1; display: flex; flex-direction: column; background: #383838; min-width: 0; }
.gamebar { height: 20px; flex: none; display: flex; align-items: center; background: #3c3c3c; white-space: nowrap; border-bottom: 1px solid #232323; }
.gb-dd { height: 19px; display: flex; align-items: center; justify-content: space-between; padding: 0 4px; border-right: 1px solid #2a2a2a; }
.gb-display { width: 81px; }
.gb-res { width: 164px; margin-left: 0; }
.gb-scale { margin-left: 3px; width: 36px; }
.gb-slider { position: relative; width: 152px; height: 2px; background: #5e5e5e; }
.gb-slider i { position: absolute; left: 0; top: -4px; width: 10px; height: 10px; border-radius: 50%; background: #999; }
.gb-val { margin-left: 6px; }
.gb-right { margin-left: auto; display: flex; height: 19px; }
.gb-btn { display: flex; align-items: center; padding-left: 3px; border-left: 1px solid #2a2a2a; }
.b-max { width: 110px; }
.b-mute { width: 74px; padding-left: 4px; }
.b-stats { width: 39px; background: #4c4c4c; }
.b-giz { width: 51px; }
.gb-arrow { width: 19px; display: flex; align-items: center; justify-content: center; border-left: 1px solid #2a2a2a; }
.gameview { position: relative; flex: 1; padding-left: 23px; overflow: hidden; }
.stats { position: absolute; left: 755px; top: 6px; width: 297px; height: 203px; background: rgba(63, 63, 63, .925); border: 1px solid #2e2e2e; padding-left: 3px; white-space: nowrap; line-height: 15px; letter-spacing: -.08px; box-shadow: 0 0 2px rgba(0, 0, 0, .5); }
.st-title { text-align: center; height: 21px; line-height: 21px; }
.st-head { font-weight: 700; color: #bcbcbc; height: 15px; }
.st-two { display: flex; height: 44px; padding-top: 3px; }
.st-col-a { width: 167px; }
.st-col-b { padding-top: 3px; }
.st-tight { height: 13px; line-height: 13px; }
.st-line { height: 15px; padding-left: 7px; }
.st-gfx { display: flex; height: 18px; }
.st-fps { margin-left: 111px; padding-top: 3px; }
.st-c1 { display: inline-block; width: 90px; }
.st-c2 { display: inline-block; width: 138px; }
.st-c3 { display: inline-block; width: 150px; }
.st-line b { color: #e4e4e4; }

/* project */
.project { flex: 1; min-height: 0; display: flex; flex-direction: column; background: #333; }
.pbar { height: 21px; }
.psearch { width: 301px; height: 16px; margin-left: auto; }
.pb-btn { width: 26px; height: 20px; display: flex; align-items: center; justify-content: center; border-left: 1px solid #2a2a2a; }
.psearch + .pb-btn { margin-left: 3px; }
.pb-btn.eye { width: 34px; gap: 1px; }
.p-body { flex: 1; min-height: 0; display: flex; }
.p-tree { width: 116px; border-right: 1px solid #1e1e1e; background: #383838; white-space: nowrap; overflow: hidden; flex: none; }
.p-row { height: 16px; display: flex; align-items: center; padding-left: 5px; }
.p-row.sub { padding-left: 32px; gap: 4px; }
.p-sel { margin-top: 15px; background: #4b4b4b; }
.ic-star { width: 13px; height: 13px; margin-left: 4px; margin-right: 4px; color: #c8c8c8; }
.ic-pico { width: 12px; height: 12px; color: #bbb; }
.fill { color: #c8c8c8; }
.p-main { flex: 1; min-width: 0; display: flex; flex-direction: column; }
.p-head { height: 21px; flex: none; background: #3c3c3c; border-bottom: 1px solid #2a2a2a; padding-left: 4px; line-height: 20px; color: #bcbcbc; }
.p-items { flex: 1; display: flex; padding: 12px 0 0 7px; }
.asset { width: 76px; display: flex; flex-direction: column; align-items: center; font-size: 10px; line-height: 14px; gap: 3px; }
.asset:nth-child(2) { margin-left: 2px; }
.asset-ic { height: 60px; display: flex; align-items: center; justify-content: center; }
.a-folder .asset-ic svg { margin-left: 4px; }
.mat-thumb { width: 60px; height: 60px; background: #4d4d4d; display: flex; align-items: center; justify-content: center; }
.mat-thumb i { display: block; width: 55px; height: 55px; border-radius: 50%; background: #000; }
.shader-s { font: 700 40px Inter, sans-serif; fill: #fff; }
.p-status { height: 13px; flex: none; background: #3c3c3c; border-top: 1px solid #232323; display: flex; justify-content: flex-end; padding-right: 17px; overflow: hidden; }
.p-slider { position: relative; width: 55px; height: 2px; margin-top: 8px; background: #5e5e5e; }
.p-slider i { position: absolute; left: 27px; top: -3px; width: 10px; height: 10px; border-radius: 50%; background: #999; }

/* inspector */
.inspector { flex: 1; min-width: 0; background: #383838; display: flex; flex-direction: column; }
.i-head { position: relative; height: 59px; padding: 9px 5px 0 42px; flex: none; }
.ih-icon { position: absolute; left: 7px; top: 10px; color: #c4c4c4; }
.ih-caret { position: absolute; left: 26px; top: 33px; }
.ih-r1 { display: flex; align-items: center; gap: 4px; margin-left: 4px; height: 18px; }
.ih-r1 .cb:first-child { margin-right: 2px; }
.ih-name { width: 359px; }
.ih-r2 { display: flex; align-items: center; height: 17px; margin-top: 6px; }
.ih-tag { width: 27px; }
.ih-dd1 { width: 191px; }
.ih-layer { margin-left: 13px; width: 37px; }
.ih-dd2 { width: 181px; }
.f { height: 18px; background: #2a2a2a; border: 1px solid #212121; border-radius: 3px; padding: 0 2px; line-height: 16px; color: #d2d2d2; white-space: nowrap; flex: 1; min-width: 0; }
.ih-name { flex: none; }
.cb { width: 14px; height: 14px; flex: none; background: #2d2d2d; border: 1px solid #212121; border-radius: 2px; display: flex; align-items: center; justify-content: center; color: #e4e4e4; }
.cb svg { width: 12px; height: 12px; }
.cb.ghost { visibility: hidden; }
.dd { height: 17px; background: #515151; border: 1px solid #2e2e2e; border-width: 0 0 1px; border-radius: 3px; display: flex; align-items: center; justify-content: space-between; padding: 0 4px 0 3px; color: #dadada; white-space: nowrap; }
.dd span { margin-top: -1px; }
.grow { flex: 1; min-width: 0; }

.comp { border-top: 1px solid #1f1f1f; flex: none; }
.ch { height: 21px; background: #3e3e3e; border-bottom: 1px solid #2a2a2a; display: flex; align-items: center; padding-left: 6px; }
.ch .ci { width: 14px; height: 14px; margin-left: 6px; margin-right: 6px; }
.ch .cb { margin-right: 6px; }
.ch-end { margin-left: auto; display: flex; align-items: center; gap: 8px; padding-right: 11px; color: #b8b8b8; }
.ch-end .e1 { width: 12px; height: 12px; }
.ch-end .e2 { width: 4px; height: 12px; margin-left: 4px; }
.comp-body { padding: 4px 5px 5px 0; }
.c-transform .comp-body { padding-bottom: 7px; }
.c-collider .comp-body { padding-top: 4px; padding-bottom: 4px; }
.row { display: flex; align-items: center; height: 18px; margin-bottom: 2px; white-space: nowrap; }
.r-pos { margin-bottom: 4px; }
.lbl { width: 204px; flex: none; padding-left: 19px; color: #b6b6b6; letter-spacing: -.08px; }
.lbl.in { padding-left: 34px; }
.lbl.short { width: 99px; }
.lbl.grow { flex: 1; width: auto; }
.off { opacity: .5; }
.sect { padding-left: 6px; color: #c0c0c0; }
.sect .fold { margin-right: 6px; }
.vec3 { flex: 1; display: grid; grid-template-columns: repeat(3, 1fr); gap: 6px; }
.vec4 { flex: 1; display: grid; grid-template-columns: repeat(4, 1fr); gap: 5px; }
.ax { display: flex; align-items: center; flex: 1; min-width: 0; }
.ax + .ax { margin-left: 6px; }
.vec3 .ax + .ax, .vec4 .ax + .ax { margin-left: 0; }
.ax em { width: 12px; flex: none; color: #b6b6b6; padding-left: 1px; }
.ax.w em { width: 14px; }
.ax.focus em { color: #5d9be0; }
.ax.focus .f { border-color: #3a79bb; }
.obj { flex: 1; min-width: 0; height: 18px; background: #2a2a2a; border: 1px solid #212121; border-radius: 3px; display: flex; align-items: center; color: #d2d2d2; }
.obj-ic { width: 12px; height: 12px; margin: 0 0 0 3px; }
.obj-plain { padding-left: 2px; }
.pick { margin-left: auto; width: 18px; height: 16px; background: #383838; border-radius: 0 3px 3px 0; display: flex; align-items: center; justify-content: center; color: #b0b0b0; }
.pick svg { width: 12px; height: 12px; }

.mat-head { position: relative; height: 55px; flex: none; border-top: 1px solid #1f1f1f; border-bottom: 1px solid #1f1f1f; padding: 3px 5px 0 53px; }
.mh-thumb { position: absolute; left: 16px; top: 6px; width: 32px; height: 32px; background: #303030; display: flex; align-items: center; justify-content: center; }
.mh-thumb i { display: block; width: 30px; height: 30px; border-radius: 50%; background: #000; }
.mh-fold { position: absolute; left: 6px; top: 40px; }
.mh-top { display: flex; align-items: center; height: 20px; padding-left: 3px; }
.mh-name { font-size: 14px; color: #9d9d9d; }
.mh-icons { margin-left: auto; display: flex; gap: 4px; color: #b8b8b8; margin-right: -2px; }
.mh-icons svg { width: 12px; height: 12px; }
.mh-shader { display: flex; align-items: center; margin-top: 5px; height: 18px; }
.mh-sl { width: 52px; color: #b6b6b6; }

.mat-body { padding: 7px 5px 6px 0; border-bottom: 1px solid #1f1f1f; flex: none; }
.mb-top { display: flex; align-items: flex-start; gap: 3px; height: 68px; }
.mb-left { flex: 1; min-width: 0; }
.mb-tex { margin-bottom: 10px; padding-top: 1px; }
.texbox { position: relative; width: 63px; height: 64px; background: #2a2a2a; border: 1px solid #212121; text-align: center; font-size: 10px; line-height: 12px; padding-top: 2px; color: #a8a8a8; }
.tex-sel { position: absolute; right: 0; bottom: 0; width: 35px; height: 12px; background: #3c3c3c; }
.r-mouse { margin-top: 5px; }
.r-queue { margin-top: 34px; margin-bottom: 4px; }
.q-dd { width: 97px; margin-right: 3px; }
.q-f { flex: none; width: 63px; }
.q-cb { margin-right: 50px; }
.add-wrap { padding: 9px 0 0 134px; }
.add-btn { width: 228px; height: 22px; background: #515151; border-bottom: 1px solid #2e2e2e; border-radius: 2px; text-align: center; line-height: 21px; color: #dadada; }

/* taskbar */
.taskbar { height: 30px; flex: none; background: #1f1f1f; display: flex; align-items: center; color: #fff; }
.task { position: relative; width: 37px; height: 30px; flex: none; display: flex; align-items: center; justify-content: center; }
.t-win { width: 36px; }
.t-edge { margin-left: 2px; }
.run::after { content: ""; position: absolute; left: 5px; right: 5px; bottom: 0; height: 2px; background: #76b9ed; }
.t-orange { background: #a85a26; border-bottom: 2px solid #ff7a18; }
.t-unity { background: #4b4b4b; border-bottom: 2px solid #76b9ed; }
.ti-vr { font: 700 6px Inter, sans-serif; fill: #10294f; }
.clock { margin-left: auto; padding-right: 10px; color: #eee; font: 12px/16px "Noto Sans", sans-serif; }
```
